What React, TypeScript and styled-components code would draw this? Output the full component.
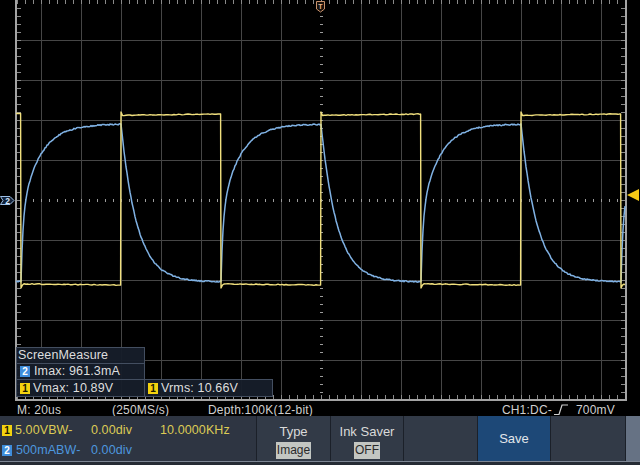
import React, { useMemo } from "react";
import styled, { createGlobalStyle } from "styled-components";

const GlobalStyle = createGlobalStyle`
  html, body { margin: 0; padding: 0; background: #000; }
  body { font-family: "Liberation Sans", Arial, sans-serif; overflow: hidden; }
  * { box-sizing: border-box; }
`;

const COLORS = {
  yellowTrace: "#f1e07e",
  blueTrace: "#80b2e4",
  grid: "#464646",
  border: "#a4a4a4",
  tick: "#8a8a8a",
  dot: "#9c9c9c",
  badgeYellow: "#f3d20f",
  badgeBlue: "#3f8ddc",
  textYellow: "#dccb55",
  textBlue: "#4d97df",
};

const Scope = styled.div`
  width: 640px;
  height: 465px;
  display: flex;
  flex-direction: column;
  background: #000;
  overflow: hidden;
`;

const Screen = styled.div`
  position: relative;
  flex: none;
  height: 401px;
`;

const Graticule = styled.svg`
  display: block;
  width: 640px;
  height: 401px;
`;

const MeasureTable = styled.div`
  position: absolute;
  left: 16px;
  top: 347px;
  display: grid;
  grid-template-columns: 129px 128px;
  grid-template-rows: 17px 16px 17px;
`;

const MeasureCell = styled.div<{ $col?: number; $row: number; $title?: boolean }>`
  grid-column: ${(p) => p.$col ?? 1};
  grid-row: ${(p) => p.$row};
  margin-top: ${(p) => (p.$row > 1 ? -1 : 0)}px;
  margin-left: ${(p) => ((p.$col ?? 1) > 1 ? -1 : 0)}px;
  display: flex;
  align-items: center;
  padding-left: ${(p) => (p.$title ? 1 : 3)}px;
  background: rgba(22, 29, 42, 0.95);
  border: 1px solid #434e60;
  color: #dedede;
  font-size: 12.5px;
  letter-spacing: 0.15px;
  line-height: 15px;
  white-space: nowrap;
`;

const Badge = styled.span<{ $ch: 1 | 2 }>`
  flex: none;
  display: inline-flex;
  align-items: center;
  justify-content: center;
  width: 10px;
  height: 11px;
  margin-right: ${(p) => (p.$ch === 1 ? 3 : 4)}px;
  background: ${(p) => (p.$ch === 1 ? COLORS.badgeYellow : COLORS.badgeBlue)};
  color: ${(p) => (p.$ch === 1 ? "#1a1800" : "#ffffff")};
  font-size: 10px;
  font-weight: bold;
  line-height: 11px;
  letter-spacing: 0;
`;

const StatusBar = styled.div`
  flex: none;
  height: 15px;
  display: flex;
  padding: 3px 25px 0 17px;
  color: #cfcfcf;
  font-size: 12px;
  letter-spacing: 0.2px;
  line-height: 12px;
  white-space: nowrap;
  background: #000;
`;

const StatusItem = styled.span<{ $w?: number }>`
  flex: none;
  width: ${(p) => (p.$w ? `${p.$w}px` : "auto")};
`;

const TriggerInfo = styled.span`
  margin-left: auto;
  display: flex;
  align-items: flex-end;
  gap: 2px;
`;

const EdgeIcon = styled.svg`
  width: 16px;
  height: 11px;
  margin-right: 4px;
  margin-bottom: 1px;
`;

const Panel = styled.div`
  flex: none;
  height: 45px;
  display: flex;
  background: #1b2029;
`;

const ChannelInfo = styled.div`
  width: 256px;
  flex: none;
  display: flex;
  flex-direction: column;
  padding: 4px 0 0 2px;
  background: #2e3542;
`;

const ChannelRow = styled.div`
  height: 20px;
  display: flex;
  align-items: center;
  font-size: 12.5px;
  letter-spacing: 0.1px;
  line-height: 20px;
  white-space: nowrap;
`;

const ChCell = styled.span<{ $w?: number; $ch: 1 | 2 }>`
  flex: none;
  width: ${(p) => (p.$w ? `${p.$w}px` : "auto")};
  color: ${(p) => (p.$ch === 1 ? COLORS.textYellow : COLORS.textBlue)};
`;

const MenuItem = styled.div<{ $w: number; $tone?: "plain" | "active" | "edge" }>`
  flex: none;
  width: ${(p) => p.$w}px;
  margin-left: 1px;
  display: flex;
  flex-direction: column;
  align-items: center;
  justify-content: ${(p) => (p.$tone === "active" ? "center" : "flex-start")};
  background: ${(p) =>
    p.$tone === "active" ? "#1d4877" : p.$tone === "edge" ? "#667284" : "#323a47"};
  color: #dadada;
`;

const MenuLabel = styled.div`
  margin-top: 8px;
  font-size: 13px;
  line-height: 16px;
  white-space: nowrap;
`;

const MenuValue = styled.div`
  margin-top: 2px;
  height: 17px;
  padding: 0 1px;
  background: #c3c6c2;
  color: #2a2a2a;
  font-size: 12px;
  line-height: 17px;
`;

const SaveLabel = styled.div`
  font-size: 13px;
  line-height: 16px;
  color: #e2e6ea;
`;

const BottomEdge = styled.div`
  flex: none;
  height: 4px;
  border-top: 1px solid #7d8694;
  background: #252b34;
`;

function makeRng(seed: number) {
  let s = seed;
  return () => {
    s = (s * 1664525 + 1013904223) % 4294967296;
    return s / 4294967296;
  };
}

function yellowPath(): string {
  const r = makeRng(7);
  const n = () => (r() - 0.5) * 0.8;
  const HI = 114.5;
  const LO = 284.5;
  let d = `M16,${HI - 1} L20.6,${HI - 1}`;
  const edges = [21, 121, 221, 321, 421, 521, 621];
  for (let i = 0; i < edges.length; i++) {
    const e = edges[i];
    const falling = i % 2 === 0;
    const end = i + 1 < edges.length ? edges[i + 1] : 625;
    if (falling) {
      d += ` L${e},${LO + 3.5} L${e + 1.5},${LO + 0.5}`;
      for (let x = e + 3; x < end - 0.5; x += 2)
        d += ` L${x},${(LO - 0.6 + ((x - e) / 100) * 1.2 + n()).toFixed(2)}`;
      d += ` L${end - 0.4},${LO + 0.6}`;
    } else {
      d += ` L${e},${HI - 2.5} L${e + 1.5},${HI + 1}`;
      for (let x = e + 3; x < end - 0.5; x += 2)
        d += ` L${x},${(HI + 0.8 - ((x - e) / 100) * 1.3 + n()).toFixed(2)}`;
      d += ` L${end - 0.4},${HI - 0.5}`;
    }
  }
  return d;
}

function bluePath(): string {
  const r = makeRng(13);
  const LO = 282;
  const HI = 124;
  const A = LO - HI;
  const pts: string[] = [];
  for (let x = 16; x <= 625; x += 1) {
    const p = ((((x - 21) % 200) + 200) % 200);
    let y: number;
    if (p < 100) {
      y = LO - A * (1 - 0.42 * Math.exp(-p / 2) - 0.58 * Math.exp(-p / 18));
    } else {
      const t = p - 100;
      y = HI + A * (1 - Math.exp(-t / 16));
    }
    y += (r() - 0.5) * 1.2;
    pts.push(`${x},${y.toFixed(2)}`);
  }
  return "M" + pts.join(" L");
}

function Grid() {
  const verticals = [];
  for (let k = 0; k < 15; k++) {
    if (k === 7) continue;
    const x = 41 + 40 * k;
    verticals.push(<rect key={`v${k}`} x={x} y={0} width={1} height={399} fill={COLORS.grid} />);
  }
  const horizontals = [];
  for (let k = 1; k < 10; k++) {
    if (k === 5) continue;
    horizontals.push(<rect key={`h${k}`} x={17} y={40 * k} width={608} height={1} fill={COLORS.grid} />);
  }
  const dots = [];
  for (let x = 25; x < 625; x += 8) dots.push(<rect key={`dx${x}`} x={x} y={199} width={1} height={3} fill={COLORS.dot} />);
  for (let y = 8; y < 399; y += 8) dots.push(<rect key={`dy${y}`} x={320} y={y} width={3} height={1} fill={COLORS.dot} />);
  const ticks = [];
  for (let y = 8; y < 399; y += 8) {
    ticks.push(<rect key={`tl${y}`} x={17} y={y} width={4} height={1} fill={COLORS.tick} />);
    ticks.push(<rect key={`tr${y}`} x={621} y={y} width={4} height={1} fill={COLORS.tick} />);
  }
  for (let x = 17; x < 625; x += 8) {
    ticks.push(<rect key={`tb${x}`} x={x} y={395} width={1} height={4} fill={COLORS.tick} />);
    ticks.push(<rect key={`tt${x}`} x={x} y={0} width={1} height={4} fill={COLORS.tick} />);
  }
  return (
    <g>
      {verticals}
      {horizontals}
      {dots}
      {ticks}
      <rect x={15} y={0} width={2} height={401} fill={COLORS.border} />
      <rect x={625} y={0} width={2} height={401} fill={COLORS.border} />
      <rect x={15} y={399} width={612} height={2} fill={COLORS.border} />
    </g>
  );
}

function Markers() {
  return (
    <g>
      <path d="M316.5,1.5 H324.5 V9 L320.5,12 L316.5,9 Z" fill="#1a120c" stroke="#c9926c" strokeWidth={1} />
      <text x={320.5} y={9} fontSize={7} fontWeight="bold" fill="#e8b890" textAnchor="middle" fontFamily="Liberation Sans, Arial, sans-serif">
        T
      </text>
      <path d="M0.5,196.5 H10 L14,200.5 L10,204.5 H0.5 L3,200.5 Z" fill="#13233a" stroke="#9ec0e6" strokeWidth={1} />
      <text x={7.5} y={204} fontSize={8.5} fontWeight="bold" fill="#d8e8fa" textAnchor="middle" fontFamily="Liberation Sans, Arial, sans-serif">
        2
      </text>
      <polygon points="627,195 639,189 639,201" fill="#f4c816" />
    </g>
  );
}

export default function App() {
  const yd = useMemo(yellowPath, []);
  const bd = useMemo(bluePath, []);
  return (
    <>
      <GlobalStyle />
      <Scope>
        <Screen>
          <Graticule viewBox="0 0 640 401">
            <Grid />
            <path d={bd} fill="none" stroke={COLORS.blueTrace} strokeWidth={1.5} strokeLinejoin="round" />
            <path d={yd} fill="none" stroke={COLORS.yellowTrace} strokeWidth={1.4} strokeLinejoin="round" />
            <Markers />
          </Graticule>
          <MeasureTable>
            <MeasureCell $row={1} $title>
              ScreenMeasure
            </MeasureCell>
            <MeasureCell $row={2}>
              <Badge $ch={2}>2</Badge>Imax: 961.3mA
            </MeasureCell>
            <MeasureCell $row={3}>
              <Badge $ch={1}>1</Badge>Vmax: 10.89V
            </MeasureCell>
            <MeasureCell $row={3} $col={2}>
              <Badge $ch={1}>1</Badge>Vrms: 10.66V
            </MeasureCell>
          </MeasureTable>
        </Screen>
        <StatusBar>
          <StatusItem $w={95}>M: 20us</StatusItem>
          <StatusItem $w={96}>(250MS/s)</StatusItem>
          <StatusItem>Depth:100K(12-bit)</StatusItem>
          <TriggerInfo>
            <span>CH1:DC-</span>
            <EdgeIcon viewBox="0 0 16 11">
              <path d="M0,10.5 H5 L8,1 H14" fill="none" stroke="#d0d0d0" strokeWidth={1.2} />
            </EdgeIcon>
            <span>700mV</span>
          </TriggerInfo>
        </StatusBar>
        <Panel>
          <ChannelInfo>
            <ChannelRow>
              <Badge $ch={1}>1</Badge>
              <ChCell $ch={1} $w={76}>5.00VBW-</ChCell>
              <ChCell $ch={1} $w={69}>0.00div</ChCell>
              <ChCell $ch={1}>10.0000KHz</ChCell>
            </ChannelRow>
            <ChannelRow>
              <Badge $ch={2}>2</Badge>
              <ChCell $ch={2} $w={75}>500mABW-</ChCell>
              <ChCell $ch={2}>0.00div</ChCell>
            </ChannelRow>
          </ChannelInfo>
          <MenuItem $w={73}>
            <MenuLabel>Type</MenuLabel>
            <MenuValue>Image</MenuValue>
          </MenuItem>
          <MenuItem $w={72}>
            <MenuLabel>Ink Saver</MenuLabel>
            <MenuValue>OFF</MenuValue>
          </MenuItem>
          <MenuItem $w={73} />
          <MenuItem $w={72} $tone="active">
            <SaveLabel>Save</SaveLabel>
          </MenuItem>
          <MenuItem $w={74} />
          <MenuItem $w={14} $tone="edge" />
        </Panel>
        <BottomEdge />
      </Scope>
    </>
  );
}
